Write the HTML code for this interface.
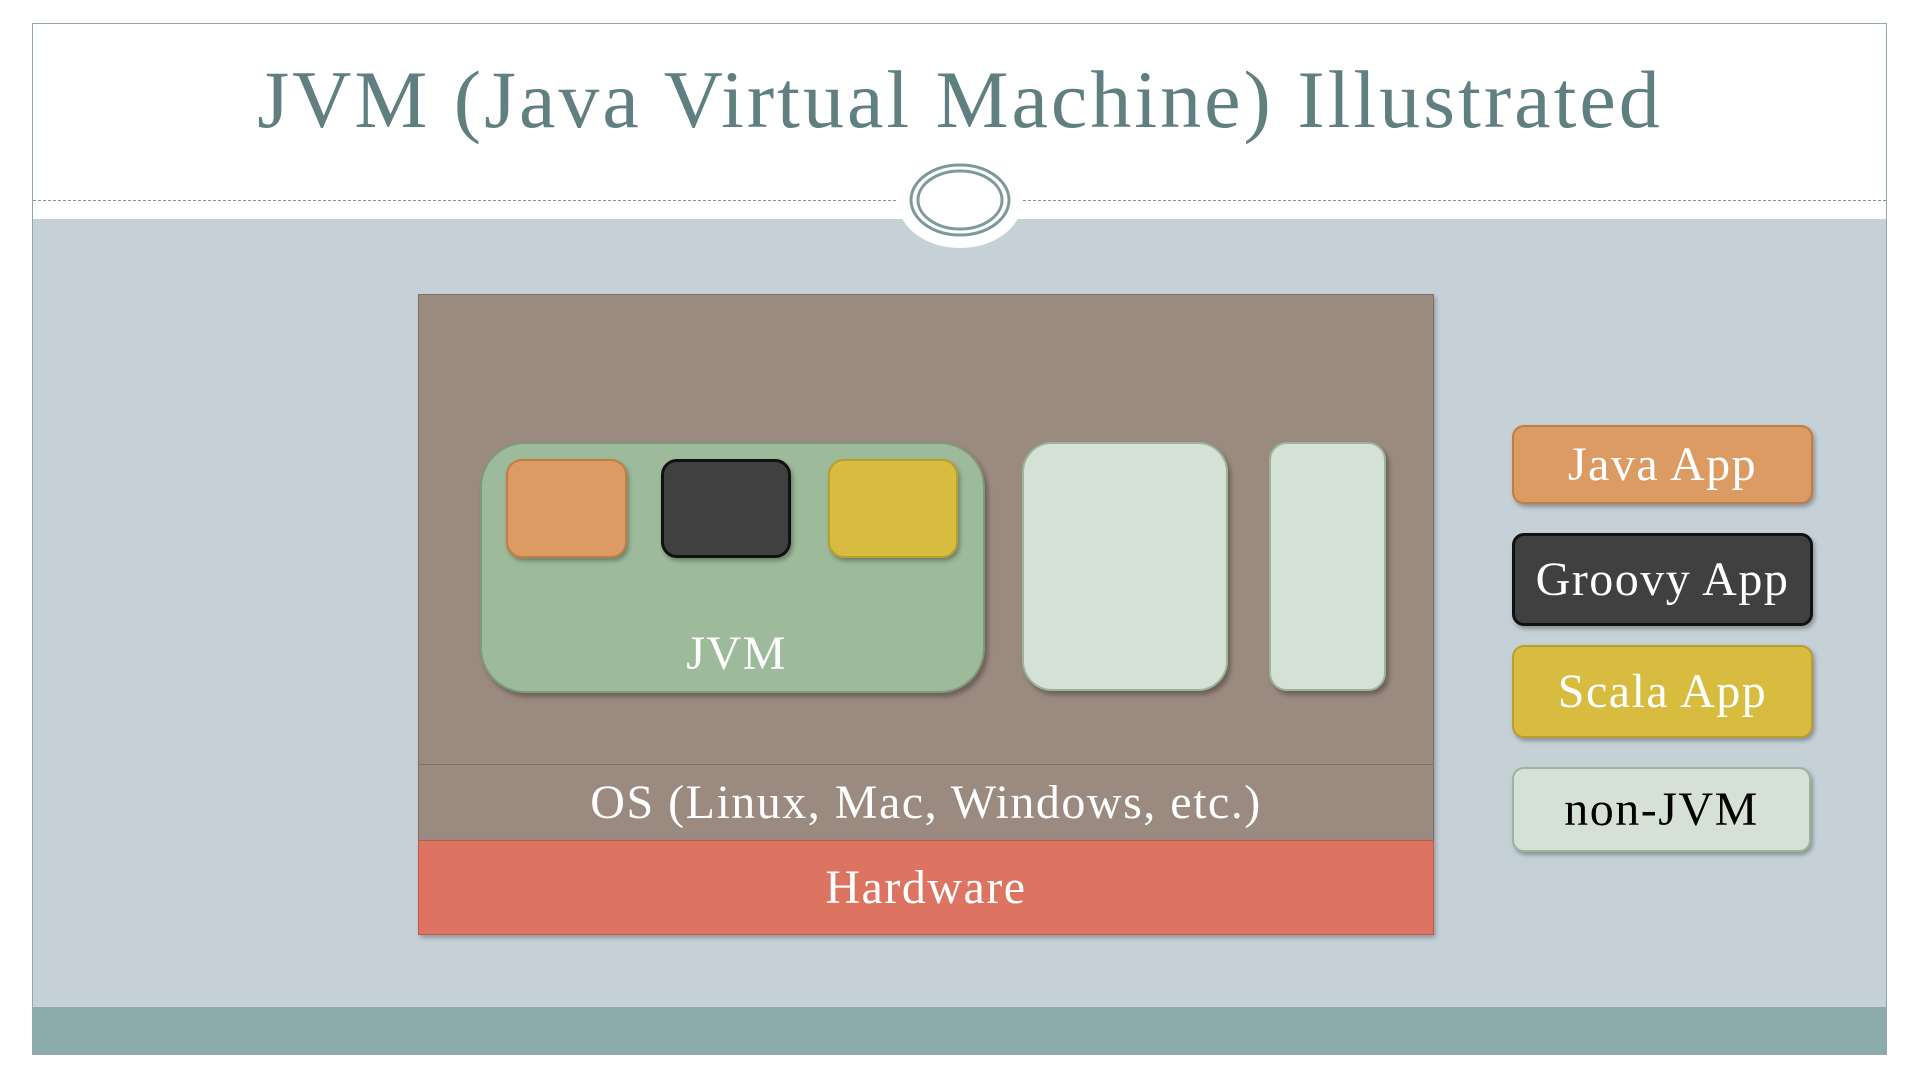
<!DOCTYPE html>
<html><head><style>
*{margin:0;padding:0;box-sizing:border-box}
body{width:1920px;height:1080px;background:#fff;position:relative;overflow:hidden;font-family:"Liberation Serif",serif}
.a{position:absolute}
.t{display:flex;align-items:center;justify-content:center;color:#fff;font-size:48px;letter-spacing:1.5px}
</style></head><body>
<div class="a" style="left:32px;top:23px;width:1855px;height:1032px;background:#c5d1d7;border:1px solid #8fa9ab"></div>
<div class="a" style="left:33px;top:24px;width:1853px;height:195px;background:#fff"></div>
<div class="a" style="left:33px;top:200px;width:1853px;border-top:1.5px dashed #7d9a9b"></div>
<div class="a" style="left:33px;top:1007px;width:1853px;height:47px;background:#8cabad"></div>
<svg class="a" style="left:880px;top:150px" width="160" height="100">
<ellipse cx="80" cy="52" rx="62" ry="46" fill="#fff"/>
<ellipse cx="80" cy="50" rx="49" ry="35" fill="none" stroke="#7d9a9b" stroke-width="3"/>
<ellipse cx="80" cy="50" rx="42" ry="29" fill="none" stroke="#7d9a9b" stroke-width="3"/>
</svg>
<div class="a" style="left:0;width:1920px;top:50px;text-align:center;font-size:82px;color:#5f7f80;line-height:100px;letter-spacing:3px">JVM (Java Virtual Machine) Illustrated</div>

<div class="a" style="left:418px;top:294px;width:1016px;height:546px;background:#9b8a80;border:1px solid #7f6f66;box-shadow:2px 3px 4px rgba(0,0,0,.25)"></div>
<div class="a t" style="left:418px;top:764px;width:1016px;height:76px;background:#9b8a80;border:1px solid #7f6f66;border-bottom:none">OS (Linux, Mac, Windows, etc.)</div>
<div class="a t" style="left:418px;top:840px;width:1016px;height:95px;background:#dc7461;border:1px solid #c05a48;box-shadow:2px 3px 4px rgba(0,0,0,.25)">Hardware</div>

<div class="a t" style="left:480px;top:442px;width:505px;height:251px;background:#9dba9a;border:2px solid #7e9a7a;border-radius:45px;align-items:flex-end;padding-bottom:10px;padding-left:8px;box-shadow:3px 4px 5px rgba(0,0,0,.3)">JVM</div>
<div class="a" style="left:506px;top:459px;width:121px;height:99px;background:#dc9b62;border:2px solid #c27d45;border-radius:16px;box-shadow:2px 3px 4px rgba(0,0,0,.3)"></div>
<div class="a" style="left:661px;top:459px;width:130px;height:99px;background:#404040;border:3px solid #111;border-radius:16px;box-shadow:2px 3px 4px rgba(0,0,0,.3)"></div>
<div class="a" style="left:828px;top:459px;width:130px;height:99px;background:#d7bc3f;border:2px solid #b9a02a;border-radius:16px;box-shadow:2px 3px 4px rgba(0,0,0,.3)"></div>
<div class="a" style="left:1022px;top:442px;width:206px;height:249px;background:#d6e1d6;border:2px solid #9bb59b;border-radius:30px;box-shadow:3px 4px 5px rgba(0,0,0,.3)"></div>
<div class="a" style="left:1269px;top:442px;width:117px;height:249px;background:#d6e1d6;border:2px solid #9bb59b;border-radius:18px;box-shadow:3px 4px 5px rgba(0,0,0,.3)"></div>

<div class="a t" style="left:1512px;top:425px;width:301px;height:79px;background:#dc9b62;border:2px solid #c27d45;border-radius:12px;box-shadow:2px 3px 4px rgba(0,0,0,.3)">Java App</div>
<div class="a t" style="left:1512px;top:533px;width:301px;height:93px;background:#404040;border:3px solid #111;border-radius:12px;box-shadow:2px 3px 4px rgba(0,0,0,.3)">Groovy App</div>
<div class="a t" style="left:1512px;top:645px;width:301px;height:93px;background:#d7bc3f;border:2px solid #b9a02a;border-radius:12px;box-shadow:2px 3px 4px rgba(0,0,0,.3)">Scala App</div>
<div class="a t" style="left:1512px;top:767px;width:299px;height:85px;background:#d6e1d6;border:2px solid #9bb59b;border-radius:12px;color:#000;box-shadow:2px 3px 4px rgba(0,0,0,.3)">non-JVM</div>
</body></html>
